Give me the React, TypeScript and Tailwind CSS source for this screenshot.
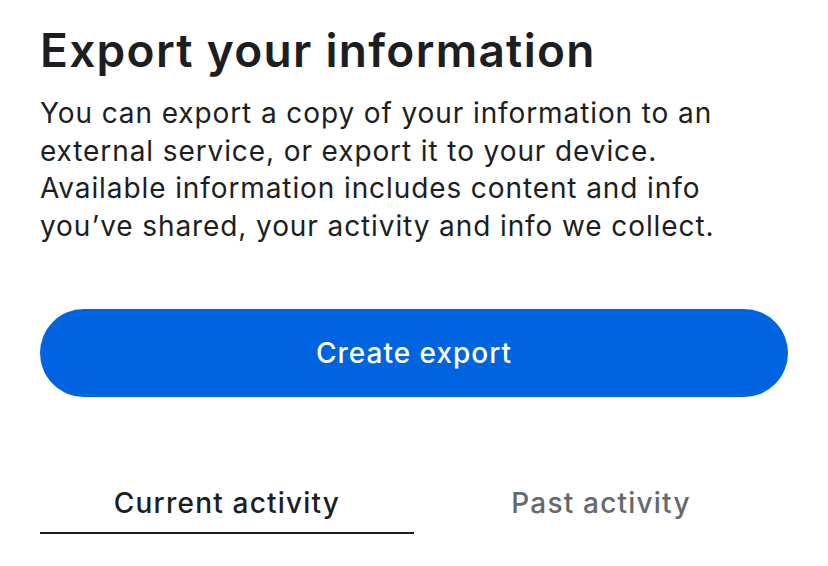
import React from "react";

export default function App() {
  return (
    <div
      className="w-[828px] h-[566px] bg-white overflow-hidden px-10 text-[#1c2b33]"
      style={{ fontFamily: "Inter, 'Noto Sans', sans-serif" }}
    >
      <h1 className="pt-[22px] text-[46px] leading-[56px] font-semibold tracking-[1.3px] text-[#1c1e21]">
        Export your information
      </h1>
      <p className="mt-[17px] text-[28px] leading-[37.5px] font-normal tracking-[0.9px] text-[#1c1e21] whitespace-nowrap">
        You can export a copy of your information to an
        <br />
        external service, or export it to your device.
        <br />
        Available information includes content and info
        <br />
        you’ve shared, your activity and info we collect.
      </p>
      <button className="mt-[64px] w-full h-[88px] rounded-full bg-[#0064e0] text-white text-[28px] font-medium tracking-[1px] flex items-center justify-center">
        Create export
      </button>
      <div className="mt-[86px] flex">
        <div className="flex-1 flex flex-col items-center">
          <span className="text-[28px] font-medium leading-[40px] tracking-[1.2px] text-[#1c1e21]">
            Current activity
          </span>
          <div className="mt-[9px] h-[2px] w-full bg-[#1c1e21]" />
        </div>
        <div className="flex-1 flex flex-col items-center">
          <span className="text-[28px] font-medium leading-[40px] tracking-[1.2px] text-[#65686c]">
            Past activity
          </span>
        </div>
      </div>
    </div>
  );
}
